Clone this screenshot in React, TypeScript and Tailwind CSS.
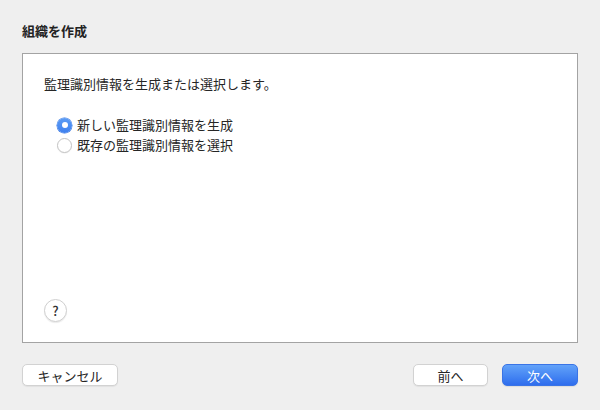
const font = {
  fontFamily: '"Noto Sans CJK JP", "Noto Sans", sans-serif',
};

const Radio = ({ checked, label }: { checked?: boolean; label: string }) => (
  <div className="flex h-[20px] items-center">
    {checked ? (
      <span className="flex h-[15px] w-[15px] items-center justify-center rounded-full bg-gradient-to-b from-[#5c9cf5] to-[#3f80ee] shadow-[0_0_0_0.5px_#3a78e0]">
        <span className="h-[6px] w-[6px] rounded-full bg-white" />
      </span>
    ) : (
      <span className="h-[15px] w-[15px] rounded-full border border-[#c4c4c4] bg-white shadow-[0_0.5px_1px_rgba(0,0,0,0.08)]" />
    )}
    <span className="ml-[5px] text-[13px] text-[#262626]">{label}</span>
  </div>
);

export default function App() {
  return (
    <div
      className="flex h-[410px] w-[600px] flex-col bg-[#efefef] px-[22px]"
      style={font}
    >
      <h1 className="mt-[22px] h-[18px] text-[13px] font-bold leading-[18px] text-[#222]">
        組織を作成
      </h1>
      <div className="mt-[13px] flex h-[290px] flex-col border border-[#a3a3a3] bg-white pl-[21px] pb-[20px]">
        <p className="mt-[21px] text-[13px] leading-[18px] text-[#262626]">
          監理識別情報を生成または選択します。
        </p>
        <div className="mt-[22px] flex flex-col pl-[13px]">
          <Radio checked label="新しい監理識別情報を生成" />
          <Radio label="既存の監理識別情報を選択" />
        </div>
        <button className="mt-auto flex h-[23px] w-[23px] items-center justify-center rounded-full border border-[#d0d0d0] bg-white text-[13px] font-medium text-[#333] shadow-[0_1px_1px_rgba(0,0,0,0.08)]">
          ?
        </button>
      </div>
      <div className="mt-[21px] flex items-center">
        <button className="h-[22px] w-[96px] rounded-[5px] border border-[#d2d2d2] bg-white text-[13px] leading-none text-[#262626] shadow-[0_1px_1px_rgba(0,0,0,0.06)]">
          キャンセル
        </button>
        <div className="ml-auto flex gap-[14px]">
          <button className="h-[22px] w-[75px] rounded-[5px] border border-[#d2d2d2] bg-white text-[13px] leading-none text-[#262626] shadow-[0_1px_1px_rgba(0,0,0,0.06)]">
            前へ
          </button>
          <button className="h-[22px] w-[76px] rounded-[5px] border border-[#3a74e6] bg-gradient-to-b from-[#62a2f9] to-[#2f6ded] text-[13px] leading-none text-white shadow-[0_1px_1px_rgba(0,0,0,0.08)]">
            次へ
          </button>
        </div>
      </div>
    </div>
  );
}
